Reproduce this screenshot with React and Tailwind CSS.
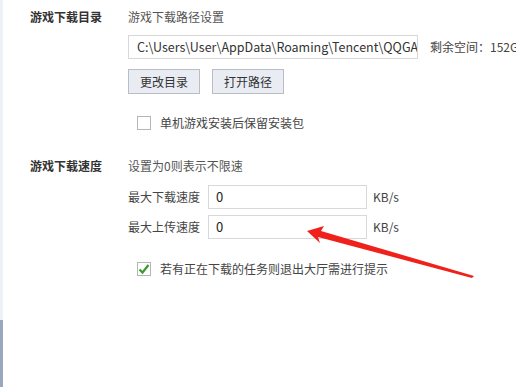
const font = { fontFamily: '"Noto Sans CJK SC", "Microsoft YaHei", sans-serif' };

function CheckBox({ checked }) {
  return (
    <span className="w-[14px] h-[14px] border border-[#b5b5b5] bg-white flex items-center justify-center shrink-0">
      {checked && (
        <svg width="12" height="12" viewBox="0 0 12 12">
          <path d="M1.5 6.5 L4.5 9.5 L10.5 2" fill="none" stroke="#3c9a2c" strokeWidth="2.2" />
        </svg>
      )}
    </span>
  );
}

function SpeedRow({ label }) {
  return (
    <div className="flex items-center h-[24px]">
      <span className="w-[80px] text-[#444]">{label}</span>
      <div className="w-[159px] h-[24px] border border-[#d8d8d8] flex items-center px-[7px] text-[13px] text-[#222]">0</div>
      <span className="ml-[6px] text-[#444]">KB/s</span>
    </div>
  );
}

export default function App() {
  return (
    <div className="relative w-[516px] h-[387px] bg-white flex overflow-hidden text-[12px] leading-[16px]" style={font}>
      {/* left edge */}
      <div className="w-[3px] flex flex-col shrink-0">
        <div className="h-[320px] bg-[#eef1f6]" />
        <div className="flex-1 bg-[#9ba7bd]" />
      </div>

      <div className="flex-1 min-w-0 pl-[27px] pt-[9px]">
        {/* download dir */}
        <div className="flex">
          <div className="w-[98px] shrink-0 font-bold text-[#333]">游戏下载目录</div>
          <div className="flex-1 min-w-0">
            <div className="text-[#555]">游戏下载路径设置</div>
            <div className="flex items-center mt-[10px]">
              <div className="w-[290px] shrink-0 h-[24px] border border-[#d8d8d8] flex items-center px-[8px] overflow-hidden whitespace-nowrap text-[#333] text-[12.5px]">
                C:\Users\User\AppData\Roaming\Tencent\QQGAME
              </div>
              <span className="ml-[12px] whitespace-nowrap text-[#444]">剩余空间：152GB</span>
            </div>
            <div className="flex gap-[12px] mt-[10px]">
              <button className="w-[72px] h-[25px] border border-[#b9bec6] bg-[#e9edf3] text-[#333] text-[12px]">更改目录</button>
              <button className="w-[72px] h-[25px] border border-[#b9bec6] bg-[#e9edf3] text-[#333] text-[12px]">打开路径</button>
            </div>
            <div className="flex items-center mt-[21px] ml-[9px] gap-[9px]">
              <CheckBox />
              <span className="text-[#444]">单机游戏安装后保留安装包</span>
            </div>
          </div>
        </div>

        {/* download speed */}
        <div className="flex mt-[27px]">
          <div className="w-[98px] shrink-0 font-bold text-[#333]">游戏下载速度</div>
          <div className="flex-1">
            <div className="text-[#555]">设置为0则表示不限速</div>
            <div className="mt-[11px] flex flex-col gap-[6px]">
              <SpeedRow label="最大下载速度" />
              <SpeedRow label="最大上传速度" />
            </div>
            <div className="flex items-center mt-[22px] ml-[9px] gap-[9px]">
              <CheckBox checked />
              <span className="text-[#444]">若有正在下载的任务则退出大厅需进行提示</span>
            </div>
          </div>
        </div>
      </div>

      {/* annotation arrow */}
      <svg className="absolute left-0 top-0" width="516" height="387" viewBox="0 0 516 387">
        <polygon points="307,231 324,226 321,231 474,276 472,278 318,237 320,243" fill="#f0211b" />
      </svg>
    </div>
  );
}
